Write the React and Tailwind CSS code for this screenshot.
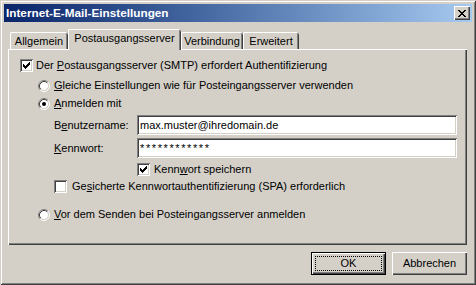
import React from "react";

const sunken =
  "shadow-[inset_1px_1px_#808080,inset_-1px_-1px_#ffffff,inset_2px_2px_#404040,inset_-2px_-2px_#d4d0c8]";

function Check({ checked }) {
  return (
    <span className={"relative block w-[13px] h-[13px] bg-white shrink-0 " + sunken}>
      {checked && (
        <svg className="absolute left-[3px] top-[3px]" width="7" height="7" viewBox="0 0 7 7" shapeRendering="crispEdges">
          <path d="M0 2h1v3H0zM1 3h1v3H1zM2 4h1v3H2zM3 3h1v3H3zM4 2h1v3H4zM5 1h1v3H5zM6 0h1v3H6z" fill="#000" />
        </svg>
      )}
    </span>
  );
}

function Radio({ checked }) {
  return (
    <svg width="12" height="12" viewBox="0 0 12 12" className="shrink-0 block">
      <circle cx="6" cy="6" r="4.5" fill="#fff" />
      <path d="M2.11 9.89A5.5 5.5 0 0 1 9.89 2.11" stroke="#808080" fill="none" />
      <path d="M9.89 2.11A5.5 5.5 0 0 1 2.11 9.89" stroke="#ffffff" fill="none" />
      <path d="M2.82 9.18A4.5 4.5 0 0 1 9.18 2.82" stroke="#404040" fill="none" />
      <path d="M9.18 2.82A4.5 4.5 0 0 1 2.82 9.18" stroke="#d4d0c8" fill="none" />
      {checked && <circle cx="6" cy="6" r="2" fill="#000" />}
    </svg>
  );
}

function U({ children }) {
  return <span className="underline underline-offset-[1px] decoration-[1px]">{children}</span>;
}

function Tab({ label, active, w }) {
  return (
    <div
      className={
        "flex items-center justify-center bg-[#d4d0c8] rounded-t-[2px] shadow-[inset_1px_0_#ffffff,inset_0_1px_#ffffff,inset_-1px_0_#404040,inset_-2px_0_#808080] " +
        (active ? "h-[21px] -mb-[1px] relative z-10 pb-[3px]" : "h-[17px] pt-[1px]")
      }
      style={{ width: w }}
    >
      {label}
    </div>
  );
}

export default function App() {
  return (
    <div className="w-[476px] h-[285px] bg-[#d4d0c8] p-[4px] flex flex-col text-[11px] leading-none text-black font-['Liberation_Sans',Arial,sans-serif] shadow-[inset_1px_1px_#d4d0c8,inset_-1px_-1px_#404040,inset_2px_2px_#ffffff,inset_-2px_-2px_#808080]">
      <div className="h-[18px] shrink-0 bg-gradient-to-r from-[#0a246a] to-[#a6caf0] flex items-center justify-between pl-[2px] pr-[2px]">
        <span className="text-white font-bold text-[11.75px]">Internet-E-Mail-Einstellungen</span>
        <div className="w-[16px] h-[14px] bg-[#d4d0c8] flex items-center justify-center shadow-[inset_1px_1px_#ffffff,inset_-1px_-1px_#404040,inset_-2px_-2px_#808080]">
          <svg width="8" height="7" viewBox="0 0 8 7" shapeRendering="crispEdges">
            <path d="M0 0h2v1H0zM6 0h2v1H6zM1 1h2v1H1zM5 1h2v1H5zM2 2h4v1H2zM3 3h2v1H3zM2 4h4v1H2zM1 5h2v1H1zM5 5h2v1H5zM0 6h2v1H0zM6 6h2v1H6z" fill="#000" />
          </svg>
        </div>
      </div>

      <div className="mt-[7px] ml-[4px] w-[459px] flex flex-col">
        <div className="flex items-end h-[20px] pl-[2px]">
          <Tab label="Allgemein" w={58} />
          <Tab label="Postausgangsserver" active w={113} />
          <Tab label="Verbindung" w={62} />
          <Tab label="Erweitert" w={56} />
        </div>
        <div className="h-[196px] bg-[#d4d0c8] shadow-[inset_1px_1px_#ffffff,inset_-1px_-1px_#404040,inset_-2px_-2px_#808080] pt-[10px] pl-[12px] flex flex-col">
          <div className="flex items-center h-[13px] gap-[3px]">
            <Check checked />
            <span>Der <U>P</U>ostausgangsserver (SMTP) erfordert Authentifizierung</span>
          </div>
          <div className="flex items-center h-[13px] gap-[4px] mt-[7px] ml-[18px]">
            <Radio />
            <span><U>G</U>leiche Einstellungen wie für Posteingangsserver verwenden</span>
          </div>
          <div className="flex items-center h-[13px] gap-[4px] mt-[5px] ml-[18px]">
            <Radio checked />
            <span><U>A</U>nmelden mit</span>
          </div>
          <div className="flex items-center h-[20px] mt-[5px] ml-[34px]">
            <span className="w-[83px]">B<U>e</U>nutzername:</span>
            <div className={"w-[320px] h-[20px] bg-white flex items-center pl-[3px] " + sunken}>max.muster@ihredomain.de</div>
          </div>
          <div className="flex items-center h-[20px] mt-[3px] ml-[34px]">
            <span className="w-[83px]"><U>K</U>ennwort:</span>
            <div className={"w-[320px] h-[20px] bg-white flex items-center pl-[3px] tracking-[1.6px] " + sunken}>************</div>
          </div>
          <div className="flex items-center h-[13px] gap-[4px] mt-[5px] ml-[117px]">
            <Check checked />
            <span>Kenn<U>w</U>ort speichern</span>
          </div>
          <div className="flex items-center h-[13px] gap-[5px] mt-[4px] ml-[34px]">
            <Check />
            <span>Ge<U>s</U>icherte Kennwortauthentifizierung (SPA) erforderlich</span>
          </div>
          <div className="flex items-center h-[13px] gap-[4px] mt-[15px] ml-[18px]">
            <Radio />
            <span><U>V</U>or dem Senden bei Posteingangsserver anmelden</span>
          </div>
        </div>
      </div>

      <div className="flex justify-end gap-[6px] mt-[7px] pr-[5px]">
        <div className="relative w-[75px] h-[23px] bg-[#d4d0c8] flex items-center justify-center shadow-[inset_0_0_0_1px_#000000,inset_2px_2px_#ffffff,inset_-2px_-2px_#404040,inset_-3px_-3px_#808080]">
          OK
          <span className="absolute inset-[4px] border border-dotted border-black"></span>
        </div>
        <div className="w-[75px] h-[23px] bg-[#d4d0c8] flex items-center justify-center shadow-[inset_1px_1px_#ffffff,inset_-1px_-1px_#404040,inset_-2px_-2px_#808080]">
          Abbrechen
        </div>
      </div>
    </div>
  );
}
